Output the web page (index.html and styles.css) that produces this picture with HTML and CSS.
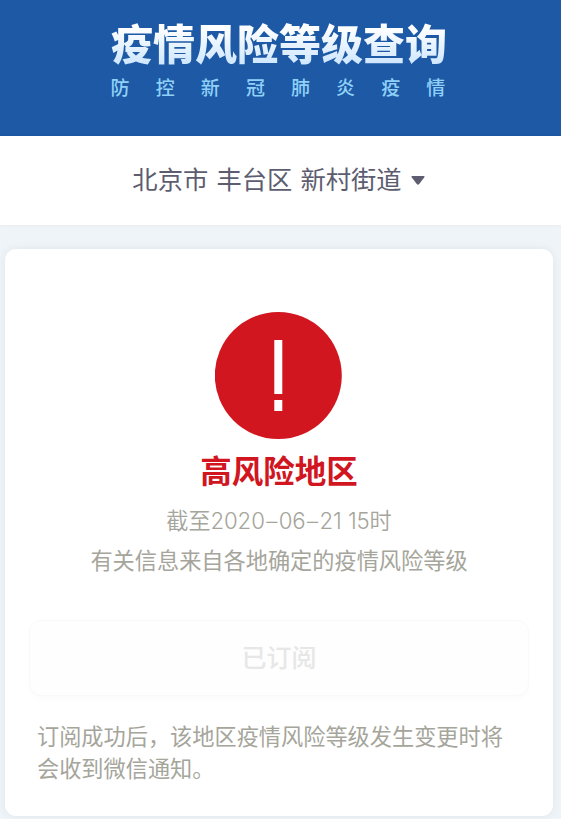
FILE: index.html
```html
<!DOCTYPE html>
<html lang="zh-CN">
<head>
    <meta charset="UTF-8">
    <meta name="viewport" content="width=device-width, initial-scale=1.0">
    <title>疫情风险等级查询</title>
    <link rel="stylesheet" href="styles.css">
</head>
<body>
    <header class="banner">
        <h1>疫情风险等级查询</h1>
        <p class="subtitle">防控新冠肺炎疫情</p>
    </header>

    <div class="region">
        <span>北京市 丰台区 新村街道</span>
        <svg class="arrow" width="14" height="9" viewBox="0 0 14 9">
            <path d="M1.5 0h11q1.8 0 .7 1.5L8.200 8q-1.200 1.300-2.400 0L.8 1.500Q-.3 0 1.500 0z" fill="#5d5d70"/>
        </svg>
    </div>

    <div class="card">
        <svg class="icon" width="128" height="128" viewBox="0 0 128 128">
            <circle cx="63.300" cy="63.500" r="63.500" fill="#d1161f"/>
            <path d="M59.300 28h8v54h-8zM59.300 88h8v11h-8z" fill="#fff"/>
        </svg>
        <h2>高风险地区</h2>
        <p class="date">截至2020<span class="dash">–</span>06<span class="dash">–</span>21 15时</p>
        <p class="source">有关信息来自各地确定的疫情风险等级</p>
        <button class="subscribed" disabled>已订阅</button>
        <p class="note">订阅成功后，该地区疫情风险等级发生变更时将会收到微信通知。</p>
    </div>
</body>
</html>
```
FILE: styles.css
```css
* {
    box-sizing: border-box;
}
body {
    margin: 0;
    height: 819px;
    overflow: hidden;
    background: #eff4f8;
    font-family: "Noto Sans CJK SC", sans-serif;
    font-weight: 400;
}
h1, h2, p {
    margin: 0;
}
.banner {
    height: 136px;
    padding: 18px 3px 0 0;
    background: #1d59a5;
    text-align: center;
}
h1 {
    font-size: 42px;
    line-height: 48px;
    font-weight: 900;
    color: transparent;
    background: linear-gradient(#fff 20%, #cfe7ff 95%);
    -webkit-background-clip: text;
    background-clip: text;
}
.subtitle {
    margin-top: 9px;
    padding-left: 24px;
    font-size: 19px;
    line-height: 24px;
    letter-spacing: 26.1px;
    font-weight: 500;
    color: #8fd0f8;
    white-space: nowrap;
}
.region {
    display: flex;
    justify-content: center;
    align-items: center;
    gap: 9px;
    height: 89px;
    padding: 0 4px 6px 0;
    background: #fff;
    font-size: 25.3px;
    word-spacing: 2.5px;
    color: #5d5d70;
    box-shadow: 0 0 4px rgba(0, 0, 0, 0.06);
}
.arrow {
    margin-top: 5px;
}
.card {
    display: flex;
    flex-direction: column;
    align-items: center;
    width: 548px;
    height: 567px;
    margin: 24px 0 0 5px;
    padding: 63px 24px 0;
    border-radius: 11px;
    background: #fff;
    box-shadow: 0 0 8px rgba(40, 70, 90, 0.08);
}
h2 {
    margin-top: 6px;
    font-size: 31.5px;
    line-height: 46px;
    font-weight: 700;
    color: #d1161f;
}
.date, .source {
    font-size: 22.2px;
    line-height: 40px;
    color: #a5a59b;
}
.date {
    margin-top: 9px;
    font-family: Inter, "Noto Sans CJK SC", sans-serif;
    font-weight: 350;
    letter-spacing: -0.1px;
}
.dash {
    margin: 0 1.5px;
}
.source {
    margin-top: -2px;
}
.subscribed {
    width: 500px;
    height: 76px;
    margin-top: 41px;
    padding: 0 0 4px;
    border: 1px solid #f9f9f9;
    border-radius: 12px;
    background: #fefefe;
    box-shadow: 0 3px 6px rgba(0, 0, 0, 0.015);
    font-family: inherit;
    font-size: 25px;
    font-weight: 500;
    color: #e7e7e7;
}
.note {
    width: 484px;
    margin-top: 23px;
    font-size: 22.2px;
    line-height: 32px;
    color: #a5a59b;
}
```
